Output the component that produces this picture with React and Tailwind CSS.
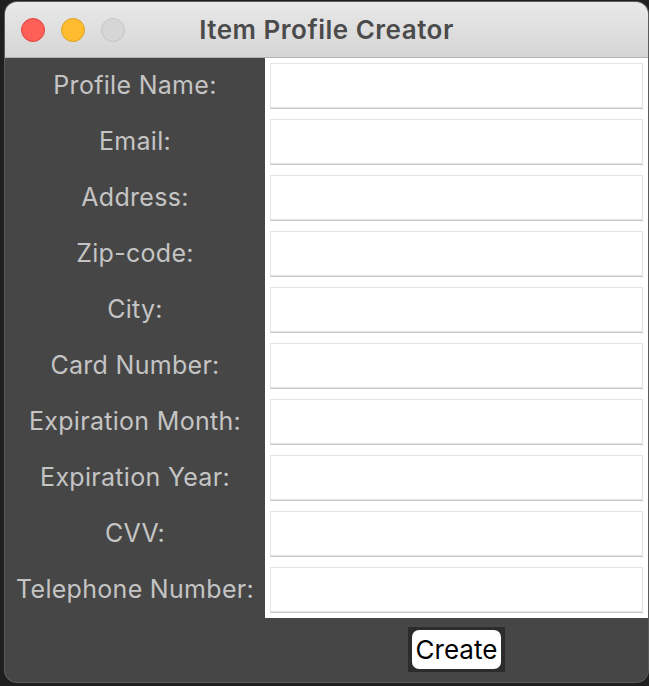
const fields = [
  'Profile Name:',
  'Email:',
  'Address:',
  'Zip-code:',
  'City:',
  'Card Number:',
  'Expiration Month:',
  'Expiration Year:',
  'CVV:',
  'Telephone Number:',
]

function TrafficLights() {
  return (
    <div className="absolute left-[16px] top-[16px] flex gap-[16px]">
      <span className="block h-[24px] w-[24px] rounded-full bg-[#fe5f57] border border-[#e0443e]" />
      <span className="block h-[24px] w-[24px] rounded-full bg-[#febc2e] border border-[#dea123]" />
      <span className="block h-[24px] w-[24px] rounded-full bg-[#d6d6d6] border border-[#c4c4c4]" />
    </div>
  )
}

export default function App() {
  return (
    <div className="h-[686px] w-[649px] overflow-hidden bg-[#1f1f1f] pt-[2px] pl-[5px] font-['Inter',sans-serif]">
      <div className="flex h-[680px] w-[643px] flex-col overflow-hidden rounded-[12px] bg-[#464646] shadow-[0_0_0_1px_#5a5a5a]">
        {/* title bar */}
        <div className="relative flex h-[56px] shrink-0 items-center justify-center border-b border-[#b3b3b3] bg-gradient-to-b from-[#e9e9e9] to-[#d5d5d5]">
          <TrafficLights />
          <h1 className="text-[26px] font-semibold tracking-[0.5px] text-[#4b4b4b]">Item Profile Creator</h1>
        </div>

        <div className="flex">
          <div className="flex w-[260px] flex-col gap-[11px] pt-[5px] pb-[6px]">
            {fields.map((f) => (
              <div key={f} className="flex h-[45px] items-center justify-center text-[25px] tracking-[0.3px] text-[#c4c4c4]">
                {f}
              </div>
            ))}
          </div>
          <div className="flex flex-1 flex-col gap-[11px] bg-white px-[5px] pt-[5px] pb-[6px]">
            {fields.map((f) => (
              <input
                key={f}
                className="h-[45px] w-full border border-[#e4e4e4] bg-white shadow-[0_1px_0_#c9c9c9] outline-none"
              />
            ))}
          </div>
        </div>

        <div className="flex flex-1 pt-[9px]">
          <div className="w-[260px]" />
          <div className="flex flex-1 justify-center">
            <div className="h-[45px] bg-[#2c2c2c] px-[4px] py-[3px]">
              <button className="h-[39px] rounded-[7px] bg-white px-[4px] text-[26px] leading-none text-black">
                Create
              </button>
            </div>
          </div>
        </div>
      </div>
    </div>
  )
}
